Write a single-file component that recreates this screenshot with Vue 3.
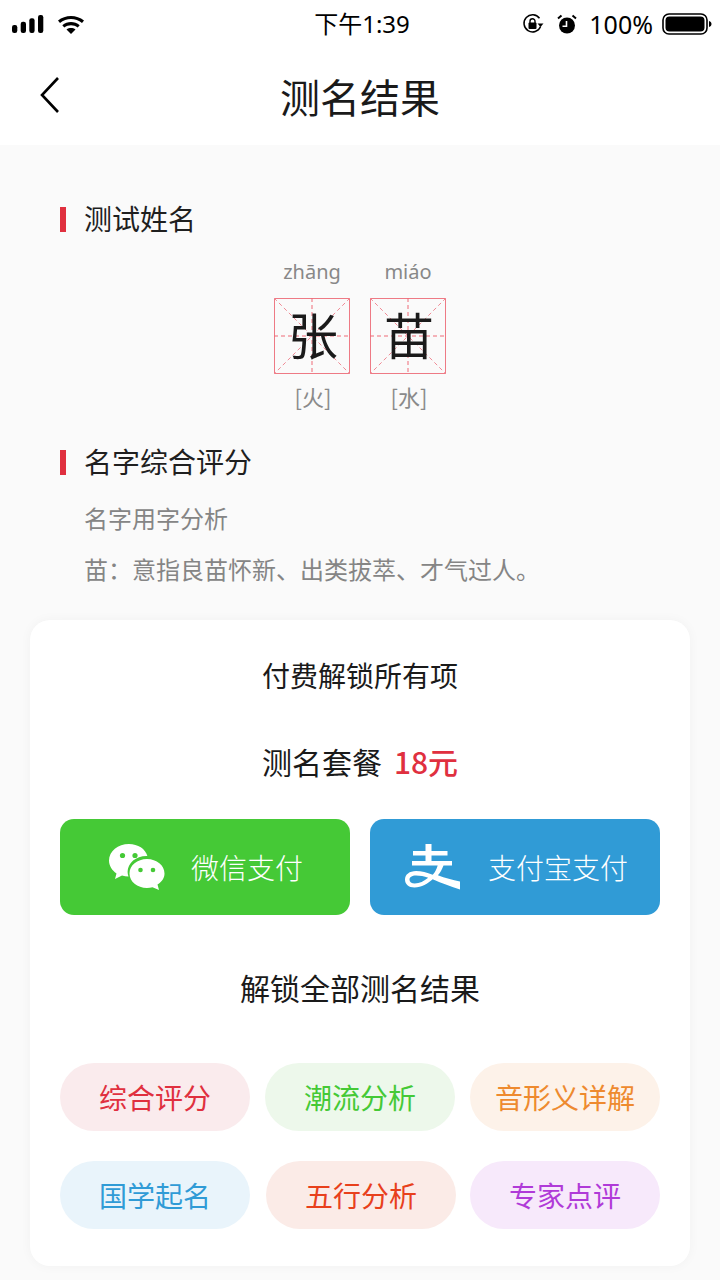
<script setup>
const chars = [
  { py: 'zhāng', ch: '张', el: '[火]' },
  { py: 'miáo', ch: '苗', el: '[水]' }
]
const tags = [
  { t: '综合评分', c: '#e0303f', b: '#faebed' },
  { t: '潮流分析', c: '#45c936', b: '#edf8eb' },
  { t: '音形义详解', c: '#ee8a2f', b: '#fdf2e9' },
  { t: '国学起名', c: '#309bd6', b: '#e9f4fb' },
  { t: '五行分析', c: '#e8401c', b: '#fbebe7' },
  { t: '专家点评', c: '#b03ad8', b: '#f7e9fb' }
]
</script>

<template>
  <div class="page">
    <div class="status">
      <div class="st-left">
        <svg width="32" height="18" viewBox="0 0 32 18" class="signal">
          <rect x="0" y="10" width="5.300" height="8" rx="2.200" />
          <rect x="8.700" y="6.700" width="5.300" height="11.300" rx="2.200" />
          <rect x="17.300" y="3.300" width="5.300" height="14.700" rx="2.200" />
          <rect x="26" y="0" width="5.300" height="18" rx="2.200" />
        </svg>
        <svg width="28" height="20" viewBox="0 0 28 20" class="wifi">
          <path d="M1 6.600C8.200 .5 19.800 .5 27 6.600l-2 2.300C18.800 3.800 9.200 3.800 3 8.900z" />
          <path d="M5.300 11.200C10.400 7 17.600 7 22.700 11.200l-2 2.300C16.800 10.400 11.200 10.400 7.300 13.500z" />
          <path d="M9.500 15.400c2.700-1.900 6.300-1.900 9 0L14 20z" />
        </svg>
      </div>
      <div class="st-time">下午1:39</div>
      <div class="st-right">
        <svg width="22" height="22" viewBox="0 0 22 22" class="ic-lock">
          <path d="M18.600 13.500A8.600 8.600 0 1 1 17.500 5.200" fill="none" stroke="#000" stroke-width="1.500" />
          <path d="M15.500 10.500h6l-3 3.500z" />
          <rect x="6.500" y="9.500" width="8" height="6.500" rx="1" />
          <path d="M8 10V8.200a2.500 2.500 0 0 1 5 0V10" fill="none" stroke="#000" stroke-width="1.400" />
        </svg>
        <svg width="22" height="22" viewBox="0 0 22 22" class="ic-alarm">
          <circle cx="11" cy="12.500" r="8" />
          <path d="M10.500 8v5.200h-4" fill="none" stroke="#fff" stroke-width="1.600" />
          <path d="M2 5.500 5.500 2.500M20 5.500 16.500 2.500" stroke="#000" stroke-width="2" fill="none" />
        </svg>
        <span class="st-pct">100%</span>
        <svg width="50" height="24" viewBox="0 0 50 24" class="ic-batt">
          <rect x="1" y="2" width="44" height="20" rx="6" fill="none" stroke="#000" stroke-width="1.600" />
          <rect x="3.500" y="4.500" width="39" height="15" rx="4" />
          <path d="M47 9c1.500.4 2.500 1.500 2.500 3s-1 2.600-2.500 3z" />
        </svg>
      </div>
    </div>

    <header class="nav">
      <svg class="back" width="22" height="38" viewBox="0 0 22 38">
        <path d="M19 2 3 19l16 17" fill="none" stroke="#000" stroke-width="2.600" />
      </svg>
      <h1 class="nav-title">测名结果</h1>
    </header>

    <main class="content">
      <div class="sec-head first">测试姓名</div>
      <div class="names">
        <div v-for="c in chars" :key="c.ch" class="name-col">
          <div class="py">{{ c.py }}</div>
          <div class="box">
            <svg class="guide" width="76" height="76" viewBox="0 0 76 76">
              <path d="M0 38H76M38 0V76" stroke="#ee6a76" stroke-width="1" stroke-dasharray="4 3" fill="none" />
              <path d="M0 0 76 76M76 0 0 76" stroke="#f08a95" stroke-width="1" stroke-dasharray="4 3" fill="none" />
            </svg>
            <span class="ch">{{ c.ch }}</span>
          </div>
          <div class="el">{{ c.el }}</div>
        </div>
      </div>
      <div class="sec-head second">名字综合评分</div>
      <p class="sub sub1">名字用字分析</p>
      <p class="sub sub2">苗：意指良苗怀新、出类拔萃、才气过人。</p>
    </main>

    <section class="card">
      <div class="card-title">付费解锁所有项</div>
      <div class="price">测名套餐<span class="money">18元</span></div>
      <div class="pays">
        <div class="pay wx">
          <svg class="pay-ic" width="56" height="46" viewBox="0 0 56 46">
            <path fill="#fff" d="M20 0C9 0 0 7.300 0 16.500c0 5.300 3 9.900 7.500 12.900L6 35l7-3.400c2 .6 4.200.9 6.500 1-.6-1.600-.9-3.100-.9-4.800 0-8.900 8.500-15.900 18.700-15.900h1.100C36.500 5 28.900 0 20 0z" />
            <path fill="#fff" d="M38 15c-9.700 0-17.500 6.400-17.500 14.500S28.300 44 38 44c1.900 0 3.800-.3 5.500-.8L50 46l-1.500-5.500C52.900 37.900 55.500 34 55.500 29.500 55.500 21.400 47.700 15 38 15z" />
            <circle cx="13.500" cy="11.500" r="2.600" fill="#45c936" />
            <circle cx="26" cy="11.500" r="2.600" fill="#45c936" />
            <circle cx="31.500" cy="26" r="2.300" fill="#45c936" />
            <circle cx="44" cy="26" r="2.300" fill="#45c936" />
          </svg>
          <span class="wx-label">微信支付</span>
        </div>
        <div class="pay ali">
          <svg class="pay-ic" width="56" height="46" viewBox="0 0 56 46">
            <path fill="#fff" d="M20.500 0h6v7H42.500v4.500H26.500V17H47v4.500h-8.500c-1.500 4-3.300 7.200-5.600 9.800C40 34 47.500 36 55 37.500V45.500c-9-2.800-18-6.300-27.300-10.300C23 39.500 16.500 43.500 9.500 43.500 3.500 43.500 0 40 0 35.500 0 30.500 4.500 27 11 27c5.500 0 10.800 1.300 16.700 3.800 2.200-2.400 3.800-5.400 5-9.300H7V17H20.500V11.500H8V7H20.500zM11 31.500C6.800 31.500 4.500 33.200 4.500 35.700 4.500 38 6.500 39.500 9.800 39.500 14.500 39.500 19 37.200 23.200 33.800 19 32.200 15 31.500 11 31.500z" />
          </svg>
          <span class="ali-label">支付宝支付</span>
        </div>
      </div>
      <div class="unlock">解锁全部测名结果</div>
      <div class="tags">
        <div v-for="t in tags" :key="t.t" class="tag" :style="{ color: t.c, background: t.b }">{{ t.t }}</div>
      </div>
    </section>
  </div>
</template>

<style>
html, body { margin: 0; background: #fafafa; }
</style>

<style scoped>
.page {
  width: 720px;
  height: 1280px;
  overflow: hidden;
  background: #fafafa;
  font-family: "Noto Sans CJK SC", "Noto Sans", sans-serif;
  color: #1a1a1a;
}
.status {
  height: 48px;
  background: #fff;
  display: flex;
  align-items: center;
  justify-content: space-between;
  position: relative;
  padding: 0 8px 0 12px;
  color: #000;
}
.st-left { display: flex; align-items: center; gap: 13px; }
.signal, .wifi, .ic-lock, .ic-alarm, .ic-batt { fill: #000; display: block; }
.st-time {
  position: absolute;
  left: 4px;
  right: 0;
  text-align: center;
  font-size: 24px;
  line-height: 48px;
  font-family: "Noto Sans", "Noto Sans CJK SC", sans-serif;
}
.st-right { display: flex; align-items: center; gap: 10px; }
.ic-alarm { margin-left: 2px; }
.st-pct { font-size: 25px; font-family: "Noto Sans", sans-serif; line-height: 48px; margin-left: 1px; margin-right: -1px; }
.nav {
  height: 97px;
  background: #fff;
  display: flex;
  align-items: center;
  justify-content: center;
  position: relative;
}
.back { position: absolute; left: 39px; top: 28px; }
.nav-title { margin: 0; font-size: 40px; font-weight: 400; line-height: 97px; color: #1a1a1a; }
.content { padding: 0 60px; }
.sec-head {
  border-left: 6px solid #e0303f;
  padding-left: 18px;
  height: 25px;
  line-height: 23px;
  font-size: 28px;
  color: #1f1f1f;
}
.first { margin-top: 62px; }
.names { display: flex; justify-content: center; gap: 20px; margin-top: 20px; }
.name-col { width: 76px; display: flex; flex-direction: column; align-items: center; }
.py { font-size: 20px; line-height: 30px; color: #888; height: 46px; padding-bottom: 6px; box-sizing: border-box; font-family: "Noto Sans", sans-serif; display: flex; align-items: center; }
.box {
  width: 76px;
  height: 76px;
  box-sizing: border-box;
  border: 1px solid #ee7a85;
  padding-bottom: 6px;
  position: relative;
  display: flex;
  align-items: center;
  justify-content: center;
}
.guide { position: absolute; left: -1px; top: -1px; }
.ch { position: relative; font-size: 50px; line-height: 70px; color: #1a1a1a; left: 1px; }
.el { font-size: 22px; line-height: 30px; margin-top: 7px; padding-left: 2px; color: #8a8a8a; }
.second { margin-top: 39px; }
.sub { margin: 0; font-size: 24px; color: #858585; padding-left: 24px; line-height: 34px; }
.sub1 { margin-top: 26px; }
.sub2 { margin-top: 17px; white-space: nowrap; }
.card {
  position: absolute;
  left: 30px;
  top: 620px;
  width: 660px;
  height: 646px;
  box-sizing: border-box;
  background: #fff;
  border-radius: 20px;
  box-shadow: 0 0 12px rgba(0, 0, 0, 0.04);
  padding: 0 30px;
}
.card-title { margin-top: 0; padding-top: 35px; font-size: 28px; line-height: 40px; text-align: center; }
.price { margin-top: 44px; font-size: 30px; line-height: 44px; text-align: center; }
.money { color: #e0303f; margin-left: 12px; font-weight: 500; }
.pays { display: flex; gap: 20px; margin-top: 36px; }
.pay {
  flex: 0 0 290px;
  box-sizing: border-box;
  height: 96px;
  border-radius: 14px;
  display: flex;
  align-items: center;
  color: #fff;
  font-size: 28px;
  font-weight: 300;
}
.wx { background: #45c936; padding-left: 49px; }
.ali { background: #309bd6; padding-left: 35px; }
.pay-ic { display: block; flex: none; }
.wx-label { margin-left: 26px; }
.ali-label { margin-left: 27px; }
.unlock { margin-top: 50px; font-size: 30px; line-height: 44px; text-align: center; }
.tags {
  display: grid;
  grid-template-columns: repeat(3, 190px);
  justify-content: space-between;
  row-gap: 30px;
  margin-top: 54px;
}
.tag {
  height: 68px;
  border-radius: 34px;
  line-height: 68px;
  text-align: center;
  font-size: 28px;
}
.tag:nth-child(5) { margin-left: 1px; margin-right: -1px; }
</style>
